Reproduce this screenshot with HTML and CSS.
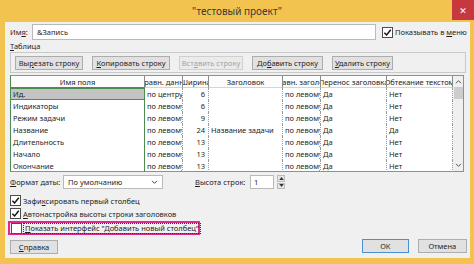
FILE: index.html
```html
<!DOCTYPE html>
<html lang="ru">
<head>
    <meta charset="UTF-8">
    <title>тестовый проект</title>
    <link rel="stylesheet" href="styles.css">
</head>
<body>
    <div class="window">
        <header class="titlebar">
            <span class="title-spacer"></span>
            <span class="title">"тестовый проект"</span>
            <span class="title-spacer end"><span class="close">&#x2715;</span></span>
        </header>

        <div class="frame">
            <main class="dialog">
                <div class="name-row">
                    <span class="lbl">Им<u>я</u>:</span>
                    <div class="textbox">&amp;Запись</div>
                    <label class="check">
                        <span class="box"><svg viewBox="0 0 10 10" width="9" height="9"><path d="M1.5 5.2 L4 7.8 L8.6 2" fill="none" stroke="#111" stroke-width="1.6"/></svg></span>
                        <span>Показывать в <u>м</u>еню</span>
                    </label>
                </div>

                <div class="section-label"><u>Т</u>аблица</div>

                <div class="toolbar">
                    <button class="btn w-cut">Вы<u>р</u>езать строку</button>
                    <button class="btn w-copy"><u>К</u>опировать строку</button>
                    <button class="btn w-paste" disabled>Вст<u>а</u>вить строку</button>
                    <button class="btn w-add">До<u>б</u>авить строку</button>
                    <button class="btn w-del"><u>У</u>далить строку</button>
                </div>

                <div class="table">
                    <div class="cols">
                        <div class="th first">Имя поля</div>
                        <div class="th"><span>Выравн. данных</span></div>
                        <div class="th"><span>Ширина</span></div>
                        <div class="th">Заголовок</div>
                        <div class="th"><span>Выравн. заголовка</span></div>
                        <div class="th"><span>Перенос заголовка</span></div>
                        <div class="th"><span>Обтекание текстом</span></div>

                        <div class="td name selected">Ид.</div>
                        <div class="td">по центру</div>
                        <div class="td num">6</div>
                        <div class="td"></div>
                        <div class="td">по левому</div>
                        <div class="td">Да</div>
                        <div class="td">Нет</div>

                        <div class="td name">Индикаторы</div>
                        <div class="td">по левому</div>
                        <div class="td num">6</div>
                        <div class="td"></div>
                        <div class="td">по левому</div>
                        <div class="td">Да</div>
                        <div class="td">Нет</div>

                        <div class="td name">Режим задачи</div>
                        <div class="td">по левому</div>
                        <div class="td num">9</div>
                        <div class="td"></div>
                        <div class="td">по левому</div>
                        <div class="td">Да</div>
                        <div class="td">Нет</div>

                        <div class="td name">Название</div>
                        <div class="td">по левому</div>
                        <div class="td num">24</div>
                        <div class="td">Название задачи</div>
                        <div class="td">по левому</div>
                        <div class="td">Да</div>
                        <div class="td">Да</div>

                        <div class="td name">Длительность</div>
                        <div class="td">по левому</div>
                        <div class="td num">13</div>
                        <div class="td"></div>
                        <div class="td">по левому</div>
                        <div class="td">Да</div>
                        <div class="td">Нет</div>

                        <div class="td name">Начало</div>
                        <div class="td">по левому</div>
                        <div class="td num">13</div>
                        <div class="td"></div>
                        <div class="td">по левому</div>
                        <div class="td">Да</div>
                        <div class="td">Нет</div>

                        <div class="td name">Окончание</div>
                        <div class="td">по левому</div>
                        <div class="td num">13</div>
                        <div class="td"></div>
                        <div class="td">по левому</div>
                        <div class="td">Да</div>
                        <div class="td">Нет</div>
                    </div>
                    <div class="scrollbar">
                        <svg class="arrow" viewBox="0 0 8 6" width="7" height="5"><path d="M1 5 L4 2 L7 5" fill="none" stroke="#555" stroke-width="1.2"/></svg>
                        <div class="thumb"></div>
                        <div class="track"></div>
                        <svg class="arrow" viewBox="0 0 8 6" width="7" height="5"><path d="M1 1 L4 4 L7 1" fill="none" stroke="#555" stroke-width="1.2"/></svg>
                    </div>
                </div>

                <div class="options-row">
                    <span class="lbl"><u>Ф</u>ормат даты:</span>
                    <div class="select">
                        <span>По умолчанию</span>
                        <svg viewBox="0 0 8 6" width="7" height="5"><path d="M1 1 L4 4 L7 1" fill="none" stroke="#444" stroke-width="1.2"/></svg>
                    </div>
                    <span class="lbl height-lbl"><u>В</u>ысота строк:</span>
                    <div class="spin-input">1</div>
                    <div class="spin">
                        <span class="spin-btn"><svg viewBox="0 0 6 4" width="5" height="3"><path d="M0 4 L3 0 L6 4Z" fill="#333"/></svg></span>
                        <span class="spin-btn"><svg viewBox="0 0 6 4" width="5" height="3"><path d="M0 0 L3 4 L6 0Z" fill="#333"/></svg></span>
                    </div>
                </div>

                <div class="checks">
                    <label class="check">
                        <span class="box"><svg viewBox="0 0 10 10" width="9" height="9"><path d="M1.5 5.2 L4 7.8 L8.6 2" fill="none" stroke="#111" stroke-width="1.6"/></svg></span>
                        <span>Зафи<u>к</u>сировать первый столбец</span>
                    </label>
                    <label class="check">
                        <span class="box"><svg viewBox="0 0 10 10" width="9" height="9"><path d="M1.5 5.2 L4 7.8 L8.6 2" fill="none" stroke="#111" stroke-width="1.6"/></svg></span>
                        <span><u>А</u>втонастройка высоты строки заголовков</span>
                    </label>
                    <div class="highlight">
                        <label class="check">
                            <span class="box"></span>
                            <span class="focus"><u>П</u>оказать интерфейс "Добавить новый столбец"</span>
                        </label>
                    </div>
                </div>

                <footer class="footer">
                    <button class="btn w-help"><u>С</u>правка</button>
                    <div class="footer-right">
                        <button class="btn w-ok default">ОК</button>
                        <button class="btn w-cancel">Отмена</button>
                    </div>
                </footer>
            </main>
        </div>
    </div>
</body>
</html>
```

FILE: styles.css
```css
* {
    margin: 0;
    padding: 0;
    box-sizing: border-box;
}

body {
    font-family: "Noto Sans", "DejaVu Sans", sans-serif;
    font-size: 7.5px;
    color: #1e1e1e;
    background: #f3c34f;
}

u {
    text-decoration: underline;
    text-underline-offset: 1px;
}

.window {
    width: 474px;
    height: 264px;
    display: flex;
    flex-direction: column;
    background: #f3c34f;
}

.titlebar {
    height: 22px;
    display: flex;
    align-items: flex-start;
}

.title-spacer {
    flex: 1;
    display: flex;
}

.title-spacer.end {
    justify-content: flex-end;
}

.title {
    font-size: 10px;
    color: #3a3a3a;
    line-height: 22px;
}

.close {
    width: 22px;
    height: 20px;
    background: #c7383d;
    color: #fff;
    font-size: 9px;
    display: flex;
    align-items: center;
    justify-content: center;
}

.frame {
    flex: 1;
    padding: 0 5px 6px 5px;
    display: flex;
}

.dialog {
    flex: 1;
    background: #f0f0f0;
    padding: 2px 3px 4px 5px;
    display: flex;
    flex-direction: column;
}

.lbl {
    white-space: nowrap;
}

.name-row {
    height: 16px;
    display: flex;
    align-items: center;
}

.name-row .lbl {
    width: 22px;
}

.textbox {
    width: 344px;
    height: 16px;
    background: #fff;
    border: 1px solid #b9b9b9;
    padding-left: 4px;
    line-height: 14px;
}

.check {
    display: flex;
    align-items: center;
    gap: 2px;
    white-space: nowrap;
}

.name-row .check {
    margin-left: 6px;
}

.box {
    width: 11px;
    height: 11px;
    background: #fff;
    border: 1px solid #4d4d4d;
    display: flex;
    align-items: center;
    justify-content: center;
}

.section-label {
    height: 12px;
    line-height: 12px;
}

.toolbar {
    width: 456px;
    height: 21px;
    border: 1px solid #c9c9c9;
    display: flex;
    align-items: center;
    gap: 9px;
    padding-left: 4px;
}

.btn {
    font: inherit;
    color: #1e1e1e;
    height: 14px;
    background: #e1e1e1;
    border: 1px solid #adadad;
    white-space: nowrap;
}

.btn:disabled {
    color: #a3a3a3;
    background: #ebebeb;
    border-color: #d0d0d0;
}

.w-cut { width: 68px; }
.w-copy { width: 78px; }
.w-paste { width: 64px; }
.w-add { width: 71px; }
.w-del { width: 61px; }

.table {
    margin-top: 2px;
    width: 454px;
    height: 97px;
    border: 1px solid #8f8f8f;
    border-left-color: #4e8a4e;
    background: #fff;
    display: flex;
}

.cols {
    display: grid;
    grid-template-columns: 134px 38px 26px 74px 38px 66px 66px;
    grid-template-rows: 12px repeat(7, 12px);
}

.th {
    display: flex;
    justify-content: center;
    align-items: center;
    overflow: hidden;
    white-space: nowrap;
    background: #fcfcfc;
    border-right: 1px solid #8a8a8a;
    border-bottom: 1px solid #d5d5d5;
}

.th.first {
    border-bottom-color: #4e8a4e;
}

.td {
    display: flex;
    align-items: center;
    overflow: hidden;
    white-space: nowrap;
    padding-left: 2px;
    border-right: 1px dotted #9a9a9a;
}

.td.num {
    justify-content: flex-end;
    padding-right: 3px;
}

.td.name {
    border-right: 1px solid #4e8a4e;
}

.td.selected {
    background: #c3c3c3;
    border: 1px solid #4e8a4e;
    border-left: none;
}

.scrollbar {
    width: 11px;
    display: flex;
    flex-direction: column;
    align-items: center;
    background: #f0f0f0;
    padding: 3px 0 3px;
}

.scrollbar .thumb {
    width: 9px;
    height: 12px;
    margin-top: 3px;
    background: #cdcdcd;
}

.scrollbar .track {
    flex: 1;
}

.options-row {
    margin-top: 3px;
    height: 14px;
    display: flex;
    align-items: center;
}

.options-row .lbl:first-child {
    width: 53px;
}

.select {
    width: 100px;
    height: 14px;
    background: #fff;
    border: 1px solid #b9b9b9;
    display: flex;
    align-items: center;
    justify-content: space-between;
    padding: 0 4px;
}

.height-lbl {
    margin-left: 32px;
    width: 55px;
}

.spin-input {
    width: 24px;
    height: 14px;
    background: #fff;
    border: 1px solid #b9b9b9;
    padding-left: 3px;
    line-height: 12px;
}

.spin {
    margin-left: 3px;
    width: 8px;
    height: 14px;
    display: flex;
    flex-direction: column;
    gap: 1px;
}

.spin-btn {
    flex: 1;
    background: #e5e5e5;
    border: 1px solid #bcbcbc;
    display: flex;
    align-items: center;
    justify-content: center;
}

.checks {
    margin-top: 6px;
    display: flex;
    flex-direction: column;
    gap: 2px;
}

.checks .check {
    height: 11px;
}

.highlight {
    margin-left: -2px;
    width: 192px;
    height: 14px;
    border: 2px solid #e0288d;
    display: flex;
    align-items: center;
    padding-left: 1px;
}

.focus {
    outline: 1px dotted #333;
    padding: 0 1px;
    line-height: 9px;
}

.footer {
    margin-top: auto;
    display: flex;
    justify-content: space-between;
    align-items: flex-end;
}

.footer-right {
    display: flex;
    gap: 9px;
    margin-bottom: 1px;
}

.w-help { width: 48px; height: 14px; }
.w-ok { width: 47px; height: 14px; }
.w-cancel { width: 49px; height: 14px; }

.btn.default {
    border-color: #4a8fd0;
}
```
